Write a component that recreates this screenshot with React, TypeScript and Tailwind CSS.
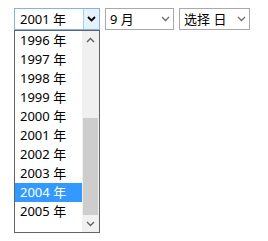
import React from 'react'

const years = ['1996', '1997', '1998', '1999', '2000', '2001', '2002', '2003', '2004', '2005']

function Chevron({ color = '#000', strong = false }: { color?: string; strong?: boolean }) {
    return (
        <svg width="9" height="6" viewBox="0 0 9 6" fill="none">
            <path d="M1 1l3.5 3.5L8 1" stroke={color} strokeWidth={strong ? 1.8 : 1.3} />
        </svg>
    )
}

function ChevronUp() {
    return (
        <svg width="9" height="6" viewBox="0 0 9 6" fill="none">
            <path d="M1 5l3.5-3.5L8 5" stroke="#606060" strokeWidth="1.4" />
        </svg>
    )
}

export default function App() {
    return (
        <div
            className="relative h-[241px] w-[268px] bg-white text-[13px] text-black"
            style={{ fontFamily: '"Noto Sans", "Noto Sans CJK SC", sans-serif' }}
        >
            <div className="flex gap-[5px] pl-[14px] pt-[8px]">
                {/* Year select (focused / open) */}
                <div className="flex h-[22px] w-[86px] items-center border border-[#7eb4ea] bg-white">
                    <span className="flex-1 pl-[5px] leading-none">2001 年</span>
                    <div className="flex h-full w-[16px] items-center justify-center border-l border-[#a6cdf2] bg-[#e5f1fb]">
                        <Chevron strong />
                    </div>
                </div>

                {/* Month select */}
                <div className="flex h-[22px] w-[69px] items-center border border-[#a9a9a9] bg-white">
                    <span className="flex-1 pl-[4px] leading-none">9 月</span>
                    <div className="flex w-[16px] items-center justify-center">
                        <Chevron color="#6d6d6d" />
                    </div>
                </div>

                {/* Day select */}
                <div className="flex h-[22px] w-[71px] items-center border border-[#a9a9a9] bg-white">
                    <span className="flex-1 pl-[4px] leading-none">选择 日</span>
                    <div className="flex w-[16px] items-center justify-center">
                        <Chevron color="#6d6d6d" />
                    </div>
                </div>
            </div>

            {/* Opened year list */}
            <div className="absolute left-[14px] top-[30px] flex h-[203px] w-[86px] border border-[#646464] bg-white">
                <div className="flex-1">
                    {years.map((y) => (
                        <div
                            key={y}
                            className={
                                y === '2004'
                                    ? 'flex h-[19px] items-center bg-[#3399ff] pl-[5px] text-white'
                                    : 'flex h-[19px] items-center pl-[5px]'
                            }
                        >
                            {y} 年
                        </div>
                    ))}
                </div>
                <div className="flex w-[17px] flex-col bg-[#f0f0f0]">
                    <div className="flex h-[17px] items-center justify-center">
                        <ChevronUp />
                    </div>
                    <div className="flex-1 pt-[70px]">
                        <div className="mx-[1px] h-full bg-[#cdcdcd]" />
                    </div>
                    <div className="flex h-[17px] items-center justify-center">
                        <Chevron color="#606060" />
                    </div>
                </div>
            </div>
        </div>
    )
}
